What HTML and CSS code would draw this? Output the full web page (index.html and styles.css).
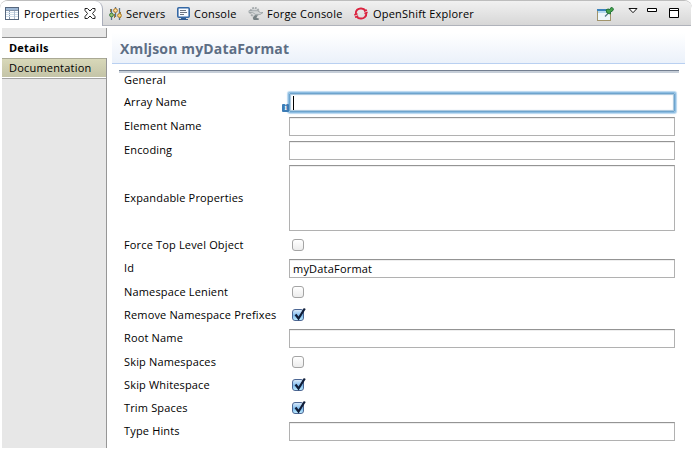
FILE: index.html
```html
<!DOCTYPE html>
<html lang="en">
<head>
<meta charset="utf-8">
<title>Properties</title>
<link rel="stylesheet" href="styles.css">
</head>
<body>
<div class="window">
  <header class="tabbar">
    <div class="tab active">
      <svg class="icon" width="14" height="13" viewBox="0 0 14 13"><rect x=".5" y=".5" width="13" height="12" fill="#fff" stroke="#56677e"/><path d="M1 1h12v2H1z" fill="#9cb6d4"/><path d="M1 3.500h12M4.500 3.500V12" stroke="#8494a9"/><path d="M1 5.500h12M1 7.500h12M1 9.500h12" stroke="#d0deeb"/><path d="M9.500 4v8" stroke="#b2bfd0"/></svg>
      <span class="label t-properties">Properties</span>
      <svg class="close" width="12" height="11" viewBox="0 0 12 11"><path d="M1 .5h2.500L6 3 8.500.5H11v2L8.500 5.500 11 8.500v2H8.500L6 8l-2.500 2.500H1v-2l2.500-3L1 2.500z" fill="#fff" stroke="#222"/></svg>
    </div>
    <div class="tab servers">
      <svg class="icon" width="13" height="13" viewBox="0 0 13 13"><path d="M2.500 2v11M6.500 0v10M10.500 1v12" stroke="#56728b" stroke-width="1.300"/><path d="M1.500 2v3M5.500 7v4M11.500 5v6" stroke="#9e7a36"/><circle cx="2.500" cy="8" r="1.900" fill="#94c36d" stroke="#437b47"/><circle cx="6.500" cy="3.500" r="1.900" fill="#ffe19b" stroke="#ad7424"/><circle cx="10.500" cy="8.500" r="1.900" fill="#ffd473" stroke="#a77a2f"/></svg>
      <span class="label t-servers">Servers</span>
    </div>
    <div class="tab console">
      <svg class="icon" width="13" height="13" viewBox="0 0 13 13"><rect x=".8" y=".8" width="11.400" height="9.400" rx="1" fill="#f8fbff" stroke="#3568a5" stroke-width="1.600"/><path d="M3 3.500h6M3 5.500h7M3 7.500h4" stroke="#6c7482"/><path d="M4 11h5v1H4zM2 12h9v1H2z" fill="#315b91"/></svg>
      <span class="label t-console">Console</span>
    </div>
    <div class="tab forge">
      <svg class="icon" width="15" height="15" viewBox="0 0 16 15"><circle cx="7" cy="6" r="4.500" fill="#d8dadb" stroke="#a4aaac" stroke-width="2" stroke-dasharray="2 1"/><path d="M1 4.500h9l3 2h3l-3 2H8l-3-2H1z" fill="#d3d6d7" stroke="#8d9598" stroke-width=".7"/><path d="M5 12l3-3 2 1-1 2 3 1-1 1.500H6z" fill="#758083"/></svg>
      <span class="label t-forge">Forge Console</span>
    </div>
    <div class="tab openshift">
      <svg class="icon" width="14" height="13" viewBox="0 0 14 13"><path d="M1.800 7.200C1.200 3.500 4.200 1.200 7.200 1.400c2 .1 3.500 1.100 4.400 2.500M12.200 5.800c.6 3.600-2.400 6-5.400 5.800-2-.1-3.500-1-4.400-2.400" fill="none" stroke="#db2440" stroke-width="2"/><path d="M.3 8l3.200-1.200M1 10.200l3.200-1.200M10 4.200l3-1.200M10.400 6.500l3.200-1.200" stroke="#db2440" stroke-width="1.500"/></svg>
      <span class="label t-openshift">OpenShift Explorer</span>
    </div>
    <div class="tools">
      <svg class="pin" width="17" height="15" viewBox="0 0 17 15"><rect x=".5" y="2.500" width="13" height="11" fill="#edf6fb" stroke="#a1946b"/><path d="M0 2h10v2H0z" fill="#3d83bb"/><path d="M1 4h12v2H1z" fill="#b4d9ef"/><path d="M8 9.500l3-3" stroke="#537785" stroke-width="1.300"/><path d="M9 3l2-1 2 .5L14.500 0l2 2-1 2-2 1v2l-3.500-1z" fill="#46a24b" stroke="#217437"/></svg>
      <svg class="menu" width="10" height="6" viewBox="0 0 10 6"><path d="M1 .5h8L5 4.700z" fill="#fff" stroke="#111"/></svg>
      <svg class="minimize" width="10" height="4" viewBox="0 0 10 4"><path d="M.5.5h9v3h-9z" fill="#fff" stroke="#000"/></svg>
      <svg class="maximize" width="10" height="10" viewBox="0 0 10 10"><path d="M.5.5h9v9h-9zM0 2.500h10" fill="#fff" stroke="#000"/></svg>
    </div>
  </header>
  <div class="body">
    <nav class="sidebar">
      <div class="side-top"></div>
      <div class="side-item selected"><span class="t-details">Details</span></div>
      <div class="side-item hover"><span class="t-doc">Documentation</span></div>
    </nav>
    <main>
      <h1>Xmljson myDataFormat</h1>
      <div class="rule"></div>
      <form>
        <div class="section">General</div>
        <div class="row"><label>Array Name</label><div class="input focus"><i class="caret"></i><b class="info">i</b></div></div>
        <div class="row"><label>Element Name</label><div class="input"></div></div>
        <div class="row"><label>Encoding</label><div class="input"></div></div>
        <div class="row tall"><label>Expandable Properties</label><div class="input"></div></div>
        <div class="row check"><label>Force Top Level Object</label><div class="box"></div></div>
        <div class="row"><label>Id</label><div class="input">myDataFormat</div></div>
        <div class="row check"><label>Namespace Lenient</label><div class="box"></div></div>
        <div class="row check"><label>Remove Namespace Prefixes</label><div class="box on"><svg width="13" height="15" viewBox="0 0 13 15"><path d="M2.500 7.500l3 4L11.800 1.500" fill="none" stroke="#101d38" stroke-width="2.200"/></svg></div></div>
        <div class="row"><label>Root Name</label><div class="input"></div></div>
        <div class="row check"><label>Skip Namespaces</label><div class="box"></div></div>
        <div class="row check"><label>Skip Whitespace</label><div class="box on"><svg width="13" height="15" viewBox="0 0 13 15"><path d="M2.500 7.500l3 4L11.800 1.500" fill="none" stroke="#101d38" stroke-width="2.200"/></svg></div></div>
        <div class="row check"><label>Trim Spaces</label><div class="box on"><svg width="13" height="15" viewBox="0 0 13 15"><path d="M2.500 7.500l3 4L11.800 1.500" fill="none" stroke="#101d38" stroke-width="2.200"/></svg></div></div>
        <div class="row"><label>Type Hints</label><div class="input"></div></div>
      </form>
    </main>
  </div>
</div>
</body>
</html>
```
FILE: styles.css
```css
* { box-sizing: border-box; }
body {
  margin: 0;
  background: #fff;
  color: #000;
  font: 11px/15px "Open Sans", "Noto Sans", sans-serif;
  letter-spacing: .2px;
  overflow: hidden;
}
svg { display: block; flex: none; }
.window {
  width: 692px;
  height: 449px;
  padding: 0 1px;
  border-top: 1px solid #bdbdbd;
  border-radius: 8px 8px 0 0;
  overflow: hidden;
}
.tabbar {
  display: flex;
  height: 25px;
  background: linear-gradient(#f1f1f1, #d7d7d7);
  border-bottom: 1px solid #b0b3bb;
}
.tab { display: flex; align-items: center; white-space: nowrap; }
.tab .icon { margin-right: 5px; }
.tab.active {
  width: 102px;
  height: 25px;
  padding-left: 4px;
  background: #fff;
  border-right: 1px solid #a9adba;
  border-radius: 0 8px 0 0;
}
.close { margin-left: 5px; }
.servers { width: 67px; padding-left: 6px; }
.console { width: 77px; padding-left: 7px; }
.servers .icon, .console .icon { margin-right: 4px; }
.forge { width: 107px; padding-left: 1px; }
.forge .icon { margin-right: 4px; }
.openshift { width: 170px; }
.tools { display: flex; align-items: flex-start; margin-left: 73px; padding-top: 6px; }
.menu { margin: 1px 0 0 14px; }
.minimize { margin: 1px 0 0 9px; }
.maximize { margin: 1px 0 0 12px; }
.body { display: flex; height: 422px; }
.sidebar {
  width: 105px;
  margin: 2px 0 0 1px;
  background: #e7e7e7;
  border-right: 1px solid #969696;
  flex: none;
}
.side-top { height: 10px; border-bottom: 1px solid #8e8e8e; }
.side-item { height: 20px; padding: 2px 0 0 7px; }
.selected { width: 105px; background: #fff; font-weight: 700; }
.hover {
  padding-top: 1px;
  background: linear-gradient(#d8d8b9, #c4c4a7);
  border-top: 1px solid #aaa994;
  border-bottom: 1px solid #fff;
  box-shadow: 0 1px #a5a5a5;
}
main { flex: 1; }
h1 {
  width: 573px;
  height: 38px;
  margin: 0 0 0 5px;
  padding: 13px 0 0 8px;
  background: linear-gradient(#fff 18%, #ebf1fa);
  border-bottom: 1px solid #b9d0f1;
  color: #5d6e84;
  font-size: 14px;
  line-height: 20px;
  letter-spacing: .15px;
}
.rule {
  width: 560px;
  height: 3px;
  margin: 6px 0 0 12px;
  background: linear-gradient(#737f90 50%, #c6ced8 50%);
}
form { padding: 0 0 0 17px; }
.section { height: 15px; margin: -1px 0 6px; }
.row { display: flex; align-items: center; height: 19px; margin-bottom: 5px; }
label { width: 165px; padding-bottom: 2px; white-space: nowrap; letter-spacing: .16px; }
.input {
  position: relative;
  width: 386px;
  height: 100%;
  border: 1px solid #b1b1b1;
  border-top-color: #949494;
  padding: 1px 3px;
  line-height: 15px;
  box-shadow: inset 0 1px #eee;
}
.tall { height: 66px; }
.check { height: 18px; }
.focus {
  border-color: #6ea4cd;
  border-radius: 1px;
  box-shadow: 0 0 0 1px #8dbde2, 0 0 1px 2px #b9d8f0, inset 0 0 1px 1px #a3c4dc;
}
.caret { display: block; width: 1px; height: 14px; margin-top: 1px; background: #000; }
.info {
  position: absolute;
  left: -8px;
  top: 10px;
  width: 7px;
  height: 8px;
  border-radius: 1px;
  background: #3d7cb5;
  color: #fff;
  font: 700 8px/8px "Liberation Serif", serif;
  letter-spacing: 0;
  text-align: center;
}
.box {
  position: relative;
  width: 12px;
  height: 12px;
  margin-left: 3px;
  border: 1px solid #a4a4a4;
  border-radius: 3px;
  background: linear-gradient(#fff, #ececec);
}
.on { border-color: #4c6794; background: linear-gradient(#d6e8fa, #7ebbed 55%, #baeaff); }
.on svg { position: absolute; left: 0; top: -3px; }
```
